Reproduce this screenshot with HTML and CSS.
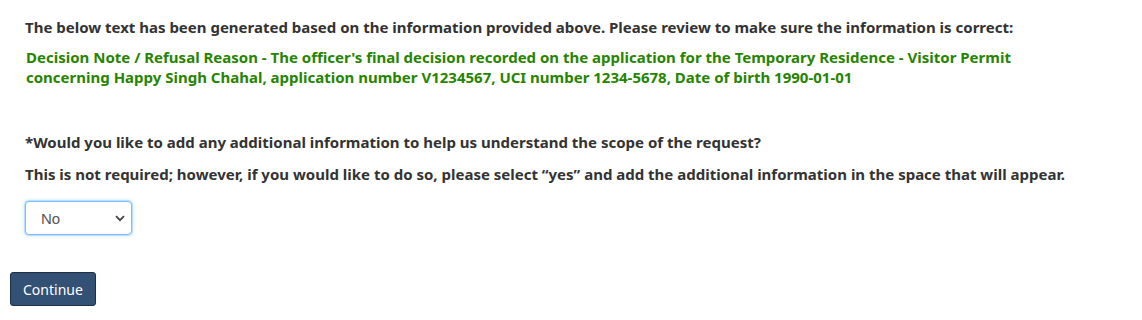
FILE: index.html
```html
<!DOCTYPE html>
<html>
<head>
<meta charset="utf-8">
<link rel="stylesheet" href="styles.css">
</head>
<body>
<div class="page">
  <div class="form-body">
    <p class="intro">The below text has been generated based on the information provided above. Please review to make sure the information is correct:</p>
    <p class="generated">Decision Note / Refusal Reason - The officer's final decision recorded on the application for the Temporary Residence - Visitor Permit concerning Happy Singh Chahal, application number V1234567, UCI number 1234-5678, Date of birth 1990-01-01</p>
    <p class="question">*Would you like to add any additional information to help us understand the scope of the request?</p>
    <p class="hint">This is not required; however, if you would like to do so, please select “yes” and add the additional information in the space that will appear.</p>
    <div class="select-wrap">
      <select class="select">
        <option>No</option>
        <option>Yes</option>
      </select>
      <svg class="chev" width="10" height="7" viewBox="0 0 10 7"><path d="M1 1.2 L5 5.2 L9 1.2" fill="none" stroke="#444" stroke-width="1.8"/></svg>
    </div>
  </div>
  <button class="btn">Continue</button>
</div>
</body>
</html>
```
FILE: styles.css
```css
html, body { margin: 0; padding: 0; background: #fff; }
body {
  font-family: "Noto Sans", "Open Sans", sans-serif;
  color: #333;
}
.page { padding: 16px 10px 10px 10px; }
.form-body { padding-left: 15px; }
p { margin: 0; }
.intro {
  font-size: 15px;
  font-weight: 700;
  line-height: 22px;
}
.generated {
  font-size: 15px;
  font-weight: 700;
  line-height: 20px;
  color: #278400;
  margin-top: 9px;
  padding-left: 1px;
  max-width: 1000px;
}
.question {
  font-size: 15px;
  font-weight: 700;
  line-height: 22px;
  margin-top: 44px;
}
.hint {
  font-size: 15px;
  font-weight: 700;
  line-height: 22px;
  margin-top: 10px;
}
.select-wrap {
  position: relative;
  width: 107px;
  margin-top: 16px;
}
.select {
  appearance: none;
  -webkit-appearance: none;
  width: 107px;
  height: 34px;
  box-sizing: border-box;
  border: 1px solid #80bdff;
  border-radius: 4px;
  box-shadow: 0 0 0 1px rgba(128,189,255,0.35), 0 0 4px rgba(102,175,233,0.5);
  background: #fff;
  font-family: "Liberation Sans", Arial, sans-serif;
  font-size: 15px;
  color: #555;
  padding: 0 0 0 15px;
  outline: none;
}
.chev {
  position: absolute;
  right: 7px;
  top: 14px;
  pointer-events: none;
}
.btn {
  display: block;
  margin-top: 37px;
  height: 34px;
  padding: 0 12px;
  background: #335075;
  border: 1px solid #1e2f47;
  border-radius: 3px;
  color: #fff;
  font-family: "Noto Sans", "Open Sans", sans-serif;
  font-size: 14px;
}
```
